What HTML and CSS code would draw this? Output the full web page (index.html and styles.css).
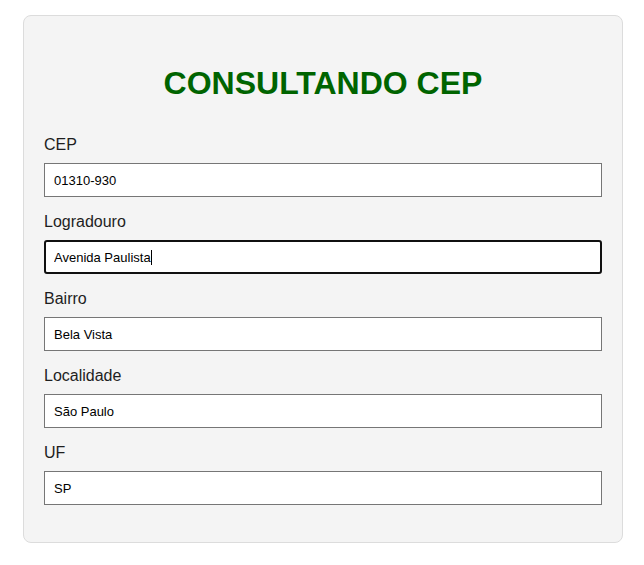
FILE: index.html
```html
<!DOCTYPE html>
<html lang="pt-BR">
<head>
<meta charset="utf-8">
<title>Consultando CEP</title>
<link rel="stylesheet" href="styles.css">
</head>
<body>
<div class="card">
  <h1 class="title">CONSULTANDO CEP</h1>
  <form class="form">
    <div class="group">
      <label class="label" for="cep">CEP</label>
      <input class="field" id="cep" type="text" value="01310-930">
    </div>
    <div class="group">
      <label class="label" for="logradouro">Logradouro</label>
      <div class="field-wrap">
        <input class="field field-focus" id="logradouro" type="text" value="Avenida Paulista">
        <span class="caret" aria-hidden="true"></span>
      </div>
    </div>
    <div class="group">
      <label class="label" for="bairro">Bairro</label>
      <input class="field" id="bairro" type="text" value="Bela Vista">
    </div>
    <div class="group">
      <label class="label" for="localidade">Localidade</label>
      <input class="field" id="localidade" type="text" value="São Paulo">
    </div>
    <div class="group">
      <label class="label" for="uf">UF</label>
      <input class="field" id="uf" type="text" value="SP">
    </div>
  </form>
</div>
</body>
</html>
```

FILE: styles.css
```css
html, body {
  margin: 0;
  padding: 0;
  background: #ffffff;
}

body {
  font-family: "Liberation Sans", Arial, sans-serif;
  padding-top: 15px;
}

.card {
  box-sizing: border-box;
  width: 600px;
  margin: 0 auto;
  position: relative;
  left: 1px;
  background: #f4f4f4;
  border: 1px solid #dcdcdc;
  border-radius: 8px;
  padding: 20px 20px 21px;
}

.title {
  margin: 29px 0 34px;
  text-align: center;
  font-size: 32px;
  font-weight: bold;
  color: #006400;
}

.form {
  margin: 0;
}

.group {
  display: flex;
  flex-direction: column;
  margin-bottom: 16px;
}

.label {
  display: block;
  font-size: 16px;
  color: #1e1e1e;
  margin-bottom: 9px;
}

.field {
  box-sizing: border-box;
  height: 34px;
  width: 100%;
  padding: 0 9px;
  font-family: "Liberation Sans", Arial, sans-serif;
  font-size: 13px;
  color: #000;
  background: #fff;
  border: 1px solid #767676;
  border-radius: 0;
}

.field-wrap {
  position: relative;
}

.field-focus {
  outline: none;
  border: 2px solid #101010;
  border-radius: 3px;
  padding: 0 8px;
}

.caret {
  position: absolute;
  left: 107px;
  top: 10px;
  width: 1px;
  height: 15px;
  background: #000;
}
```
